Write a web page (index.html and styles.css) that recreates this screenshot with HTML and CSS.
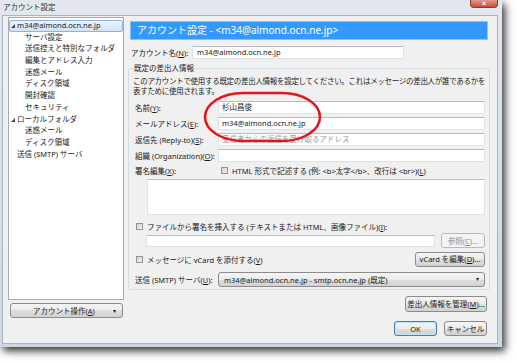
FILE: index.html
```html
<!DOCTYPE html>
<html lang="ja">
<head>
    <meta charset="UTF-8">
    <meta name="viewport" content="width=device-width, initial-scale=1.0">
    <title>アカウント設定</title>
    <link rel="stylesheet" href="styles.css">
</head>
<body>
    <div class="window">
        <div class="titlebar">
            <span class="title">アカウント設定</span>
            <span class="close">x</span>
        </div>
        <div class="client">
            <div class="side">
                <ul class="tree">
                    <li class="node selected"><span class="arrow"></span>m34@almond.ocn.ne.jp</li>
                    <li class="child">サーバ設定</li>
                    <li class="child">送信控えと特別なフォルダ</li>
                    <li class="child">編集とアドレス入力</li>
                    <li class="child">迷惑メール</li>
                    <li class="child">ディスク領域</li>
                    <li class="child">開封確認</li>
                    <li class="child">セキュリティ</li>
                    <li class="node"><span class="arrow"></span>ローカルフォルダ</li>
                    <li class="child">迷惑メール</li>
                    <li class="child">ディスク領域</li>
                    <li class="leaf">送信 (SMTP) サーバ</li>
                </ul>
                <button class="btn side-btn"><span>アカウント操作(<u>A</u>)</span><span class="drop">▾</span></button>
            </div>

            <div class="main">
                <div class="header">アカウント設定 - &lt;m34@almond.ocn.ne.jp&gt;</div>

                <div class="account">
                    <label>アカウント名(<u>N</u>):</label>
                    <div class="input">m34@almond.ocn.ne.jp</div>
                </div>

                <fieldset class="group">
                    <legend>既定の差出人情報</legend>
                    <p class="desc">このアカウントで使用する既定の差出人情報を設定してください。これはメッセージの差出人が誰であるかを<br>表すために使用されます。</p>

                    <div class="field first">
                        <label>名前(<u>Y</u>):</label>
                        <div class="input">杉山昌俊</div>
                    </div>
                    <div class="field">
                        <label>メールアドレス(<u>E</u>):</label>
                        <div class="input">m34@almond.ocn.ne.jp</div>
                    </div>
                    <div class="field">
                        <label>返信先 (Reply-to)(<u>S</u>):</label>
                        <div class="input placeholder">受信者からの返信を受け取るアドレス</div>
                    </div>
                    <div class="field">
                        <label>組織 (Organization)(<u>O</u>):</label>
                        <div class="input"></div>
                    </div>
                    <div class="field sig">
                        <label>署名編集(<u>X</u>):</label>
                        <span class="check"></span>
                        <span>HTML 形式で記述する (例: &lt;b&gt;太字&lt;/b&gt;、改行は &lt;br&gt;)(<u>L</u>)</span>
                    </div>
                    <div class="textarea"></div>

                    <div class="option file-opt">
                        <span class="check"></span>
                        <span>ファイルから署名を挿入する (テキストまたは HTML、画像ファイル)(<u>I</u>):</span>
                    </div>
                    <div class="file-row">
                        <div class="input"></div>
                        <button class="btn browse" disabled>参照(<u>C</u>)...</button>
                    </div>
                    <div class="option vcard">
                        <span class="check"></span>
                        <span>メッセージに vCard を添付する(<u>V</u>)</span>
                        <button class="btn vcard-btn">vCard を編集(<u>D</u>)...</button>
                    </div>
                    <div class="field smtp">
                        <label>送信 (SMTP) サーバ(<u>U</u>):</label>
                        <div class="select"><span>m34@almond.ocn.ne.jp - smtp.ocn.ne.jp (既定)</span><span class="drop">▾</span></div>
                    </div>
                </fieldset>

                <div class="actions">
                    <button class="btn manage">差出人情報を管理(<u>M</u>)...</button>
                    <div class="dialog-buttons">
                        <button class="btn ok">OK</button>
                        <button class="btn">キャンセル</button>
                    </div>
                </div>
            </div>
        </div>
    </div>

    <!-- red marker drawn over the name / address fields -->
    <svg class="mark" width="517" height="363" viewBox="0 0 517 363">
        <rect x="205" y="93" width="115" height="48" rx="38" ry="24" fill="none" stroke="#e3161d" stroke-width="2.5"/>
    </svg>
</body>
</html>
```

FILE: styles.css
```css
* {
    box-sizing: border-box;
}
body {
    margin: 0;
    background: #fff;
    font-family: "Noto Sans", "Noto Sans CJK JP", sans-serif;
    font-size: 7.5px;
    color: #1a1a1a;
    overflow: hidden;
    width: 517px;
    height: 363px;
}
u {
    text-decoration: underline;
}
.window {
    width: 502px;
    height: 347px;
    padding: 0 4px 3px 2px;
    background: linear-gradient(to bottom, #e2e8ee, #cdd8e3);
    box-shadow: 3px 4px 8px rgba(0, 0, 0, 0.8);
    display: flex;
    flex-direction: column;
}
.titlebar {
    height: 15px;
    display: flex;
    justify-content: space-between;
    align-items: flex-start;
}
.title {
    padding: 2px 0 0 1px;
    line-height: 10px;
    color: #333;
}
.close {
    width: 28px;
    height: 8px;
    background: linear-gradient(to bottom, #e39a8c, #c9503a);
    border: 1px solid #8c3b2d;
    border-top: 0;
    border-radius: 0 0 4px 4px;
    color: #fff;
    font-family: "DejaVu Sans", sans-serif;
    font-size: 6px;
    line-height: 6px;
    text-align: center;
    font-weight: bold;
}
.client {
    flex: 1;
    background: #f0f0f0;
    border: 1px solid #a9b5c2;
    display: flex;
    padding: 1px 0 0 5px;
}

/* left side: account tree */
.side {
    width: 116px;
    margin-right: 4px;
    display: flex;
    flex-direction: column;
}
.tree {
    list-style: none;
    margin: 0;
    padding: 2px 0 0;
    height: 283px;
    background: #fff;
    border: 1px solid #a5acb5;
}
.tree li {
    height: 11.7px;
    line-height: 9.7px;
    border: 1px solid transparent;
    white-space: nowrap;
}
.tree .node {
    padding-left: 1px;
}
.tree .child {
    padding-left: 15px;
}
.tree .leaf {
    padding-left: 7px;
}
.tree .selected {
    background: linear-gradient(to bottom, #ebf4fd, #cfe3fb);
    border-color: #8fb3df;
    border-radius: 2px;
}
.arrow {
    display: inline-block;
    width: 0;
    height: 0;
    border-left: 4px solid transparent;
    border-bottom: 4px solid #444;
    margin-right: 2px;
    vertical-align: 0;
}
.btn {
    font: inherit;
    color: #1a1a1a;
    border: 1px solid #8b8b8b;
    border-radius: 3px;
    background: linear-gradient(to bottom, #f4f4f4 0%, #ececec 50%, #dedede 50%, #d2d2d2 100%);
    padding: 0;
    height: 15px;
    line-height: 12px;
}
.side-btn {
    margin: 3px 1px 0 2px;
    display: flex;
    justify-content: space-between;
    padding: 0 6px 0 22px;
    align-items: center;
}
.drop {
    font-size: 6px;
}

/* right side */
.main {
    width: 362px;
}
.header {
    margin: 4px 2px 0;
    height: 19px;
    background: #3399ff;
    border: 1px solid #8cc2f7;
    color: #fff;
    font-size: 10px;
    line-height: 16px;
    padding-left: 6px;
    white-space: nowrap;
}
.account {
    display: flex;
    align-items: center;
    margin-top: 6px;
    height: 13px;
}
.account label {
    padding-left: 3px;
    width: 64px;
}
.account .input {
    width: 212px;
    padding-left: 4px;
}
.input {
    height: 13px;
    background: #fff;
    border: 1px solid #dfe3e8;
    border-top-color: #b9bdc3;
    line-height: 11px;
    padding-left: 3px;
    white-space: nowrap;
    overflow: hidden;
}
.placeholder {
    color: #9a9a9a;
}
.group {
    margin: 4px 0 0;
    padding: 0 4px 2px;
    border: 1px solid #d4dce3;
    border-radius: 3px;
    min-width: 0;
}
.group legend {
    padding: 0 1px;
    line-height: 10px;
}
.desc {
    margin: 3px 0 0;
    line-height: 10px;
    white-space: nowrap;
    letter-spacing: -0.3px;
}
.field {
    display: flex;
    align-items: center;
    height: 13px;
    margin-top: 3px;
}
.field.first {
    margin-top: 5px;
}
.field label {
    width: 85px;
    padding-left: 2px;
    white-space: nowrap;
}
.field .input {
    flex: 1;
}
.sig {
    height: 11px;
}
.sig .check {
    margin: 0 4px 0 3px;
}
.check {
    display: inline-block;
    width: 7px;
    height: 7px;
    border: 1px solid #939393;
    background: linear-gradient(135deg, #cfcfcf, #f4f4f4);
    flex: none;
}
.textarea {
    margin: 3px 0 0 14px;
    height: 36px;
    background: #fff;
    border: 1px solid #dfe3e8;
    border-top-color: #b9bdc3;
}
.option {
    display: flex;
    align-items: center;
    padding-left: 3px;
    white-space: nowrap;
}
.option .check {
    margin-right: 4px;
}
.file-opt {
    margin-top: 5px;
    height: 12px;
}
.file-row {
    display: flex;
    align-items: center;
    margin: 1px 0 0 13px;
    height: 15px;
}
.file-row .input {
    flex: 1;
    height: 12px;
}
.browse {
    width: 44px;
    margin-left: 6px;
    color: #8d8d8d;
    border-color: #b5b9bc;
    background: #f4f4f4;
}
.vcard {
    margin-top: 3px;
    height: 16px;
}
.vcard-btn {
    margin-left: auto;
    width: 70px;
}
.smtp {
    margin-top: 4px;
    height: 16px;
}
.select {
    flex: 1;
    height: 15px;
    border: 1px solid #8b8b8b;
    border-radius: 3px;
    background: linear-gradient(to bottom, #f4f4f4 0%, #ececec 50%, #dedede 50%, #d2d2d2 100%);
    display: flex;
    justify-content: space-between;
    align-items: center;
    padding: 0 5px 0 5px;
    white-space: nowrap;
}
.actions {
    display: flex;
    flex-direction: column;
    align-items: flex-end;
    padding-right: 3px;
}
.manage {
    margin-top: 6px;
    width: 82px;
    height: 16px;
}
.dialog-buttons {
    display: flex;
    gap: 7px;
    margin-top: 9px;
}
.dialog-buttons .btn {
    width: 43px;
}
.ok {
    border-color: #3c7fb1;
    box-shadow: inset 0 0 0 1px #bfe6f8;
}
.mark {
    position: absolute;
    left: 0;
    top: 0;
    pointer-events: none;
}
```
